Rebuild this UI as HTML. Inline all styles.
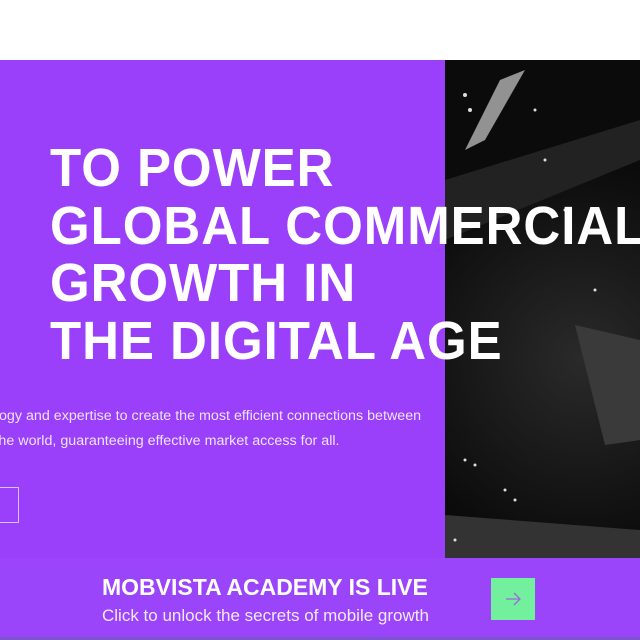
<!DOCTYPE html>
<html><head><style>
*{margin:0;padding:0;box-sizing:border-box}
body{width:640px;height:640px;overflow:hidden;background:#fff;position:relative;font-family:"Liberation Sans",sans-serif}
.wrap{position:absolute;left:0;top:0;width:640px;height:640px;overflow:hidden}
.hero{position:absolute;left:0;top:60px;width:640px;height:498px;background:#9a40fb}
.img{position:absolute;left:445px;top:60px;width:195px;height:498px;background:radial-gradient(circle at 70% 60%,#2a2a2a,#0b0b0b 60%),#111;overflow:hidden}
h1{position:absolute;left:50px;top:140px;color:#fff;font-size:54px;line-height:57.5px;font-weight:bold;white-space:nowrap;transform:scaleX(0.945);transform-origin:left top;letter-spacing:1px}
p{position:absolute;left:-131px;top:403px;color:#efe3ff;font-size:13.5px;line-height:25px;white-space:nowrap;transform:scaleX(1.058);transform-origin:left top}
.btn{position:absolute;left:-20px;top:487px;width:39px;height:36px;border:1px solid #d9c0ff}
.banner{position:absolute;left:0;top:558px;width:640px;height:79px;background:#9b45fa}
.b1{position:absolute;left:102px;top:574px;color:#fff;font-weight:bold;font-size:23px;white-space:nowrap}
.b2{position:absolute;left:102px;top:606px;color:#f2e8ff;font-size:17px;white-space:nowrap}
.go{position:absolute;left:491px;top:578px;width:44px;height:42px;background:#72f09e}
.strip{position:absolute;left:0;top:637px;width:640px;height:3px;background:#7b55d0}
</style></head><body><div class="wrap">
<div class="hero"></div>
<div class="img">
<svg width="195" height="498">
<polygon points="55,20 80,10 40,80 20,90" fill="#ccc" opacity=".7"/>
<polygon points="0,120 195,60 195,100 0,180" fill="#222"/>
<polygon points="130,265 195,280 195,380 160,385" fill="#3a3a3a"/>
<polygon points="0,455 195,470 195,498 0,498" fill="#333"/>
<g fill="#ddd"><circle cx="20" cy="35" r="2"/><circle cx="25" cy="50" r="2"/><circle cx="90" cy="50" r="1.5"/><circle cx="100" cy="100" r="1.5"/><circle cx="120" cy="150" r="1.5"/><circle cx="150" cy="230" r="1.5"/><circle cx="20" cy="400" r="1.5"/><circle cx="30" cy="405" r="1.5"/><circle cx="60" cy="430" r="1.5"/><circle cx="70" cy="440" r="1.5"/><circle cx="10" cy="480" r="1.5"/></g>
</svg>
</div>
<h1>TO POWER<br>GLOBAL COMMERCIAL<br>GROWTH IN<br>THE DIGITAL AGE</h1>
<p>We leverage technology and expertise to create the most efficient connections between<br>businesses all over the world, guaranteeing effective market access for all.</p>
<div class="btn"></div>
<div class="banner"></div>
<div class="b1">MOBVISTA ACADEMY IS LIVE</div>
<div class="b2">Click to unlock the secrets of mobile growth</div>
<div class="go"><svg width="44" height="42"><path d="M15 21h14M23 15l6 6-6 6" stroke="#9a6ad8" stroke-width="1.3" fill="none"/></svg></div>
<div class="strip"></div>
</div></body></html>
